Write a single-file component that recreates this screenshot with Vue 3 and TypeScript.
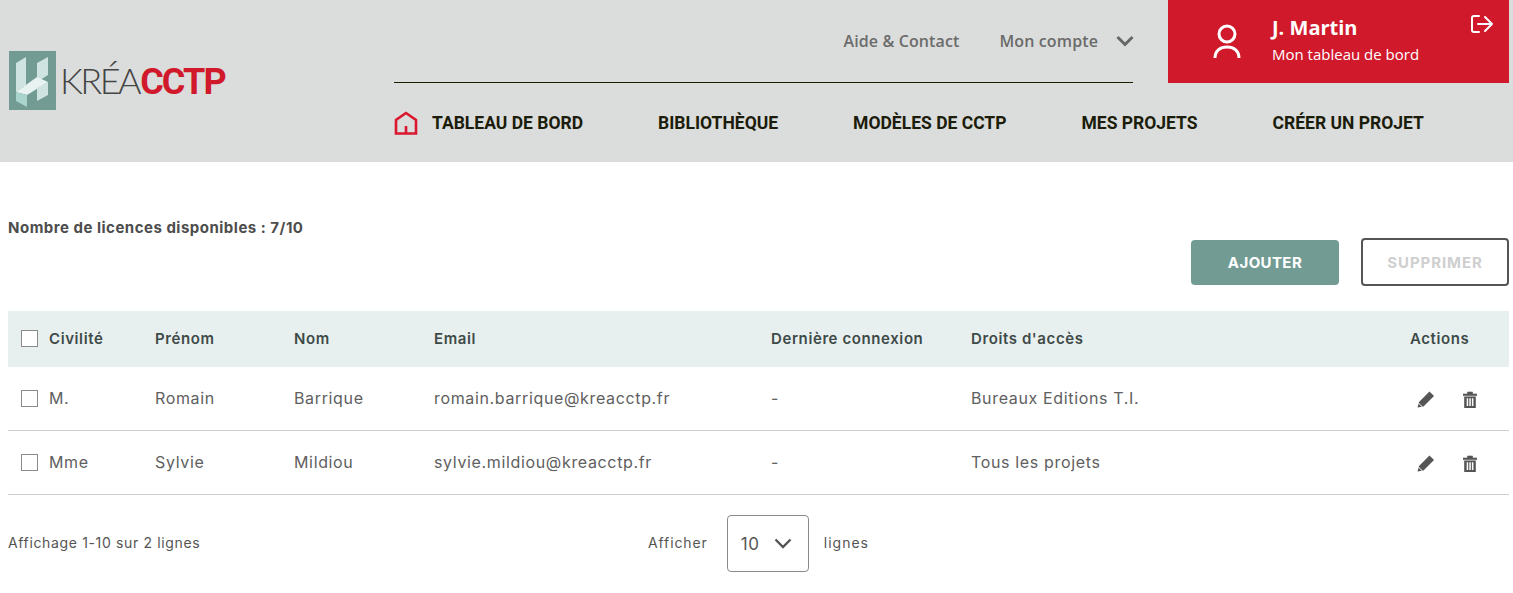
<script setup lang="ts">
interface Row { civ: string; first: string; last: string; email: string; seen: string; rights: string }
const rows: Row[] = [
  { civ: 'M.', first: 'Romain', last: 'Barrique', email: 'romain.barrique@kreacctp.fr', seen: '-', rights: 'Bureaux Editions T.I.' },
  { civ: 'Mme', first: 'Sylvie', last: 'Mildiou', email: 'sylvie.mildiou@kreacctp.fr', seen: '-', rights: 'Tous les projets' },
]
const nav = ['BIBLIOTHÈQUE', 'MODÈLES DE CCTP', 'MES PROJETS', 'CRÉER UN PROJET']
</script>

<template>
  <div class="page">
    <header class="header">
      <div class="logo">
        <svg class="logo-mark" width="47" height="59" viewBox="0 0 47 59">
          <rect width="47" height="59" fill="#729b94" />
          <path d="M7 12 17 6V34L7 41Z" fill="#cfe3e0" />
          <path d="M28 12 39 6V24L28 31Z" fill="#cfe3e0" />
          <path d="M7 41 28 26 39 31 18 44Z" fill="#e8f3f1" />
          <path d="M7 41 18 44V56L7 50Z" fill="#a9d4cd" />
          <path d="M28 37 39 31V44L28 50Z" fill="#cfe3e0" />
        </svg>
        <div class="logo-text">
          <span class="krea">KRÉA</span><span class="cctp">CCTP</span>
        </div>
      </div>
      <div class="topbar">
        <a class="top-link">Aide &amp; Contact</a>
        <a class="top-link account">Mon compte
          <svg width="18" height="12" viewBox="0 0 18 12"><path d="M1.5 2 9 9.5 16.5 2" fill="none" stroke="#666" stroke-width="3" /></svg>
        </a>
      </div>
      <div class="user">
        <svg class="user-icon" width="28" height="36" viewBox="0 0 28 36" fill="none" stroke="#fff" stroke-width="3">
          <circle cx="14" cy="10" r="8" />
          <path d="M2 34C2 27 7 23 14 23S26 27 26 34" />
        </svg>
        <div class="user-text">
          <div class="user-name">J. Martin</div>
          <div class="user-sub">Mon tableau de bord</div>
        </div>
        <svg class="logout" width="24" height="20" viewBox="0 0 24 20" fill="none" stroke="#fff" stroke-width="2" stroke-linecap="round" stroke-linejoin="round">
          <path d="M9 2H4Q2 2 2 4V16Q2 18 4 18H9" />
          <path d="M8 10H22M15 3 22 10 15 17" />
        </svg>
      </div>
      <nav class="nav">
        <a class="nav-item home">
          <svg width="24" height="24" viewBox="0 0 24 24" fill="none" stroke="#d9182f" stroke-width="2.6">
            <path d="M2 22.5V9L12 2 22 9V22.5Z" />
            <path d="M12 22V15" />
          </svg>
          TABLEAU DE BORD
        </a>
        <a v-for="item in nav" :key="item" class="nav-item">{{ item }}</a>
      </nav>
    </header>

    <main class="content">
      <div class="toolbar">
        <p class="licences">Nombre de licences disponibles : 7/10</p>
        <div class="buttons">
          <button class="btn primary">AJOUTER</button>
          <button class="btn ghost">SUPPRIMER</button>
        </div>
      </div>

      <table class="table">
        <colgroup>
          <col class="c1" /><col class="c2" /><col class="c3" />
          <col class="c4" /><col class="c5" /><col class="c6" /><col />
        </colgroup>
        <thead>
          <tr>
            <th><span class="check-cell"><i class="check"></i>Civilité</span></th>
            <th>Prénom</th>
            <th>Nom</th>
            <th>Email</th>
            <th>Dernière connexion</th>
            <th>Droits d'accès</th>
            <th>Actions</th>
          </tr>
        </thead>
        <tbody>
          <tr v-for="r in rows" :key="r.email">
            <td><span class="check-cell"><i class="check"></i>{{ r.civ }}</span></td>
            <td>{{ r.first }}</td>
            <td>{{ r.last }}</td>
            <td>{{ r.email }}</td>
            <td>{{ r.seen }}</td>
            <td>{{ r.rights }}</td>
            <td>
              <span class="actions">
                <svg width="18" height="18" viewBox="0 0 18 18"><path d="M0.5 17.5 2 12 12.5 1.5 17 6 6.5 16.5Z" fill="#555" /><path d="M1.5 13 5.5 17" stroke="#fff" stroke-width="1" /></svg>
                <svg width="14" height="17" viewBox="0 0 14 17"><path d="M0 3H14V4.6H0ZM4.5 3V1H9.5V3" fill="#555" stroke="#555" stroke-width=".6" /><path fill-rule="evenodd" d="M1.2 5.5H12.8V17H1.2ZM3.7 7.2V15H5.2V7.2ZM6.3 7.2V15H7.8V7.2ZM8.9 7.2V15H10.4V7.2Z" fill="#555" /></svg>
              </span>
            </td>
          </tr>
        </tbody>
      </table>

      <footer class="footer">
        <span class="count">Affichage 1-10 sur 2 lignes</span>
        <div class="pager">
          <span class="pager-label">Afficher</span>
          <div class="select">
            <span>10</span>
            <svg width="18" height="11" viewBox="0 0 18 11"><path d="M1.5 1.5 9 9 16.5 1.5" fill="none" stroke="#555" stroke-width="2.4" /></svg>
          </div>
          <span class="pager-label last">lignes</span>
        </div>
      </footer>
    </main>
  </div>
</template>

<style scoped>
.page { width: 1513px; height: 593px; overflow: hidden; background: #fff; font-family: Inter, "Liberation Sans", sans-serif; color: #555; }
.header { height: 162px; background: #dbdddc; display: grid; grid-template-columns: 394px 774px 341px 4px; grid-template-rows: 83px 79px; }
.logo { grid-row: 1 / 3; display: flex; align-items: center; padding-left: 9px; padding-bottom: 1px; gap: 4px; }
.logo-mark { flex: none; }
.logo-text { font-size: 36px; line-height: 1; margin-top: 1px; font-family: Lato, sans-serif; white-space: nowrap; }
.krea { font-weight: 300; color: #444; letter-spacing: -2.5px; }
.cctp { font-weight: 700; color: #d1192c; font-family: Roboto, sans-serif; letter-spacing: -1.9px; margin-left: 1px; }
.topbar { border-bottom: 1px solid #1c1c00; margin-right: 35px; display: flex; justify-content: flex-end; align-items: flex-start; gap: 40px; font-family: "Open Sans", sans-serif; font-size: 16px; letter-spacing: .12px; font-weight: 600; color: #6b6b6b; padding-top: 30px; line-height: 22px; }
.top-link { white-space: nowrap; }
.account { display: flex; align-items: center; gap: 18px; margin-right: -1px; }
.user { background: #d1192c; color: #fff; display: flex; align-items: flex-start; position: relative; font-family: "Open Sans", sans-serif; }
.user-icon { margin: 24px 0 0 45px; flex: none; }
.user-text { margin: 15px 0 0 31px; }
.user-name { font-size: 20px; font-weight: 700; line-height: 26px; }
.user-sub { font-size: 15px; line-height: 20px; margin-top: 3px; }
.logout { position: absolute; top: 14px; right: 15px; }
.nav { grid-column: 2 / 4; display: flex; align-items: flex-start; padding-top: 27px; gap: 75px; font-family: Roboto, sans-serif; font-weight: 700; font-size: 17.5px; color: #1c1c0a; line-height: 26px; }
.nav-item { white-space: nowrap; }
.home { display: flex; align-items: center; gap: 14px; }
.content { padding: 0 4px 0 8px; }
.toolbar { height: 149px; display: flex; justify-content: space-between; align-items: flex-start; }
.licences { margin: 57px 0 0; font-size: 15px; letter-spacing: .5px; font-weight: 700; line-height: 18px; color: #4d4d4d; }
.buttons { display: flex; align-items: center; gap: 22px; margin-top: 76px; }
.btn { font-family: inherit; font-size: 15px; letter-spacing: .4px; font-weight: 700; border-radius: 4px; }
.primary { width: 148px; height: 45px; background: #729b94; color: #fff; border: none; }
.ghost { width: 148px; height: 48px; background: #fff; color: #cfcfcf; border: 2px solid #555; letter-spacing: .9px; }
.table { width: 1501px; border-collapse: separate; border-spacing: 0; table-layout: fixed; font-size: 16px; letter-spacing: .65px; }
.c1 { width: 147px; } .c2 { width: 139px; } .c3 { width: 140px; } .c4 { width: 337px; } .c5 { width: 200px; } .c6 { width: 439px; }
th { height: 56px; background: #e8f0ef; text-align: left; font-size: 15px; letter-spacing: .6px; font-weight: 600; color: #3e4a48; padding: 0 0 2px; box-sizing: border-box; }
td { height: 64px; border-bottom: 1px solid #cfcfcf; padding: 0 0 1px; color: #606060; white-space: nowrap; box-sizing: border-box; }
.check-cell { display: flex; align-items: center; gap: 11px; padding-left: 13px; }
.check { display: block; width: 17px; height: 17px; border: 1px solid #8a8a8a; background: #fff; box-sizing: border-box; flex: none; }
.actions { display: flex; align-items: center; gap: 28px; padding-left: 7px; padding-top: 2px; }
.footer { display: flex; align-items: center; height: 97px; font-size: 14px; letter-spacing: .65px; color: #555; }
.count { width: 640px; margin-bottom: 2px; }
.pager { display: flex; align-items: center; gap: 19px; letter-spacing: .9px; }
.pager-label { margin-bottom: 2px; }
.last { margin-left: -4px; letter-spacing: 1px; }
.select { width: 82px; height: 57px; box-sizing: border-box; border: 1px solid #8a8a8a; border-radius: 4px; display: flex; align-items: center; gap: 14px; padding-left: 13px; font-size: 17px; letter-spacing: .6px; }
</style>

<style>
body { margin: 0; }
</style>
